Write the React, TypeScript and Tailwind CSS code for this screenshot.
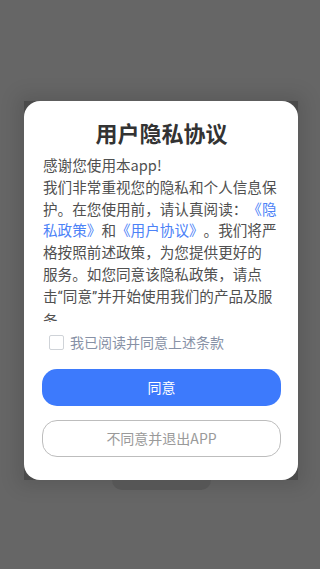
import { useState } from "react";

const font = { fontFamily: '"Noto Sans CJK SC", "Noto Sans", sans-serif' };
const latin = { fontFamily: 'Roboto, "Noto Sans", sans-serif' };

export default function App() {
  const [checked, setChecked] = useState(false);

  return (
    <div className="w-[320px] h-[569px] bg-[#666666] overflow-hidden" style={font}>
      <div className="pt-[101px] pl-[24px] pr-[22px]">
        <div className="relative">
          {/* dark backdrop behind the card */}
          <div className="bg-[#4b4b4b] shadow-[0_0_18px_6px_rgba(0,0,0,0.12)]">
            <div className="bg-white rounded-[16px] h-[379px] flex flex-col pt-[16px] pl-[18px] pr-[17px]">
              <h1 className="text-center text-[22px] font-bold text-[#333333] leading-[30px]">
                用户隐私协议
              </h1>

              <div className="mt-[7px] ml-[1px] h-[168px] overflow-hidden text-[14.6px] leading-[21.8px] text-[#505050] whitespace-nowrap [text-spacing-trim:space-all]">
                <div>感谢您使用本app!</div>
                <div>我们非常重视您的隐私和个人信息保</div>
                <div>
                  护。在您使用前，请认真阅读：<span className="text-[#4c82f7]">《隐</span>
                </div>
                <div>
                  <span className="text-[#4c82f7]">私政策》</span>和<span className="text-[#4c82f7]">《用户协议》</span>。我们将严
                </div>
                <div>格按照前述政策，为您提供更好的</div>
                <div>服务。如您同意该隐私政策，请点</div>
                <div>
                  击<span style={latin}>“</span>同意<span style={latin}>”</span>并开始使用我们的产品及服
                </div>
                <div>务。</div>
              </div>

              <label className="mt-[10px] ml-[7px] flex items-center gap-[6px] cursor-pointer">
                <span
                  onClick={() => setChecked(!checked)}
                  className={`w-[15px] h-[15px] rounded-[2px] border border-[#cfd3d8] flex items-center justify-center ${checked ? "bg-[#3d7afc] border-[#3d7afc]" : "bg-white"}`}
                >
                  {checked && (
                    <svg width="10" height="10" viewBox="0 0 10 10">
                      <path d="M1.5 5 L4 7.5 L8.5 2.5" stroke="white" strokeWidth="1.6" fill="none" />
                    </svg>
                  )}
                </span>
                <span className="text-[14px] leading-[20px] text-[#8791a6]">我已阅读并同意上述条款</span>
              </label>

              <button className="mt-[17px] h-[37px] w-full rounded-[15px] bg-[#3d7afc] text-white text-[14px]">
                同意
              </button>
              <button className="mt-[14px] h-[37px] w-full rounded-[15px] border border-[#bdbdbd] bg-white text-[#9a9a9a] text-[14px]">
                不同意并退出APP
              </button>
            </div>
          </div>
          <div className="mx-auto w-[99px] h-[10px] rounded-b-[14px] bg-[#565656]" />
        </div>
      </div>
    </div>
  );
}
